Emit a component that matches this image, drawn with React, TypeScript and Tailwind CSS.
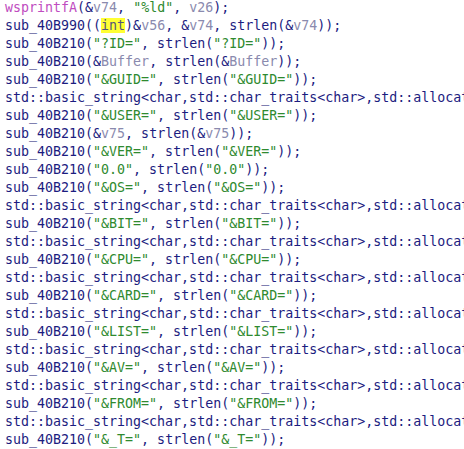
const lines: string[] = [
  'wsprintfA(&v74, "%ld", v26);',
  'sub_40B990((int)&v56, &v74, strlen(&v74));',
  'sub_40B210("?ID=", strlen("?ID="));',
  'sub_40B210(&Buffer, strlen(&Buffer));',
  'sub_40B210("&GUID=", strlen("&GUID="));',
  'std::basic_string<char,std::char_traits<char>,std::allocator<char>>::append();',
  'sub_40B210("&USER=", strlen("&USER="));',
  'sub_40B210(&v75, strlen(&v75));',
  'sub_40B210("&VER=", strlen("&VER="));',
  'sub_40B210("0.0", strlen("0.0"));',
  'sub_40B210("&OS=", strlen("&OS="));',
  'std::basic_string<char,std::char_traits<char>,std::allocator<char>>::append();',
  'sub_40B210("&BIT=", strlen("&BIT="));',
  'std::basic_string<char,std::char_traits<char>,std::allocator<char>>::append();',
  'sub_40B210("&CPU=", strlen("&CPU="));',
  'std::basic_string<char,std::char_traits<char>,std::allocator<char>>::append();',
  'sub_40B210("&CARD=", strlen("&CARD="));',
  'std::basic_string<char,std::char_traits<char>,std::allocator<char>>::append();',
  'sub_40B210("&LIST=", strlen("&LIST="));',
  'std::basic_string<char,std::char_traits<char>,std::allocator<char>>::append();',
  'sub_40B210("&AV=", strlen("&AV="));',
  'std::basic_string<char,std::char_traits<char>,std::allocator<char>>::append();',
  'sub_40B210("&FROM=", strlen("&FROM="));',
  'std::basic_string<char,std::char_traits<char>,std::allocator<char>>::append();',
  'sub_40B210("&_T=", strlen("&_T="));',
];

const tokenRe = /("[^"]*"|\bv\d+\b|\bBuffer\b|\bwsprintfA\b|\bint\b)/g;

function Line({ text }: { text: string }) {
  const parts = text.split(tokenRe);
  return (
    <div className="h-[18px] leading-[18px]">
      {parts.map((p, i) => {
        if (!p) return null;
        if (p.startsWith('"')) {
          return (
            <span key={i} className="text-[#2f8a2f]">
              {p}
            </span>
          );
        }
        if (/^v\d+$/.test(p) || p === 'Buffer') {
          return (
            <span key={i} className="text-[#8a8aae]">
              {p}
            </span>
          );
        }
        if (p === 'wsprintfA') {
          return (
            <span key={i} className="text-[#c04cc0]">
              {p}
            </span>
          );
        }
        if (p === 'int') {
          return (
            <span key={i} className="bg-[#ffff33] text-[#55557a]">
              {p}
            </span>
          );
        }
        return <span key={i}>{p}</span>;
      })}
    </div>
  );
}

export default function App() {
  return (
    <div className="h-[449px] w-[464px] overflow-hidden bg-white">
      <div className="-mt-[1px] whitespace-pre pl-[5px] font-['DejaVu_Sans_Mono',monospace] text-[13.3px] text-[#1c1c80]">
        {lines.map((l, i) => (
          <Line key={i} text={l} />
        ))}
      </div>
    </div>
  );
}
